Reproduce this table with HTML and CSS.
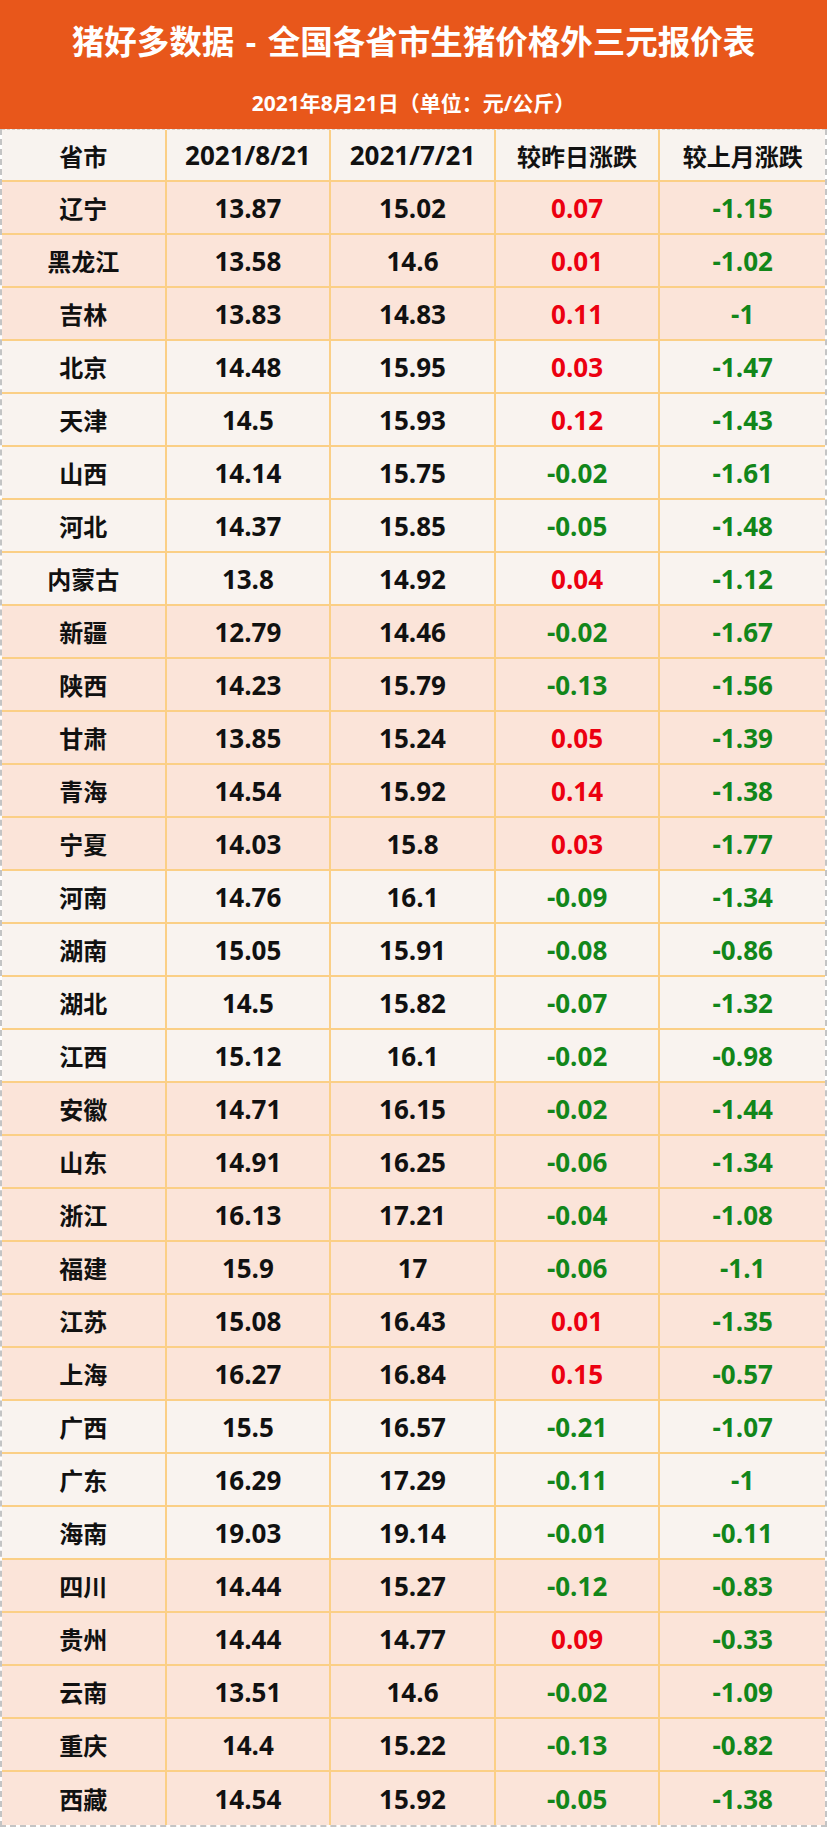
FILE: index.html
```html
<!DOCTYPE html>
<html lang="zh-CN">
<head>
<meta charset="utf-8">
<title>猪好多数据 - 全国各省市生猪价格外三元报价表</title>
<link rel="stylesheet" href="styles.css">
</head>
<body>
<div class="page">
  <header class="banner">
    <h1 class="title">猪好多数据 - 全国各省市生猪价格外三元报价表</h1>
    <p class="subtitle">2021年8月21日（单位：元/公斤）</p>
  </header>
  <div class="sheet">
    <div class="row head"><div class="cell">省市</div><div class="cell">2021/8/21</div><div class="cell">2021/7/21</div><div class="cell">较昨日涨跌</div><div class="cell">较上月涨跌</div></div>
    <div class="row pink"><div class="cell">辽宁</div><div class="cell">13.87</div><div class="cell">15.02</div><div class="cell up">0.07</div><div class="cell down">-1.15</div></div>
    <div class="row pink"><div class="cell">黑龙江</div><div class="cell">13.58</div><div class="cell">14.6</div><div class="cell up">0.01</div><div class="cell down">-1.02</div></div>
    <div class="row pink"><div class="cell">吉林</div><div class="cell">13.83</div><div class="cell">14.83</div><div class="cell up">0.11</div><div class="cell down">-1</div></div>
    <div class="row light"><div class="cell">北京</div><div class="cell">14.48</div><div class="cell">15.95</div><div class="cell up">0.03</div><div class="cell down">-1.47</div></div>
    <div class="row light"><div class="cell">天津</div><div class="cell">14.5</div><div class="cell">15.93</div><div class="cell up">0.12</div><div class="cell down">-1.43</div></div>
    <div class="row light"><div class="cell">山西</div><div class="cell">14.14</div><div class="cell">15.75</div><div class="cell down">-0.02</div><div class="cell down">-1.61</div></div>
    <div class="row light"><div class="cell">河北</div><div class="cell">14.37</div><div class="cell">15.85</div><div class="cell down">-0.05</div><div class="cell down">-1.48</div></div>
    <div class="row light"><div class="cell">内蒙古</div><div class="cell">13.8</div><div class="cell">14.92</div><div class="cell up">0.04</div><div class="cell down">-1.12</div></div>
    <div class="row pink"><div class="cell">新疆</div><div class="cell">12.79</div><div class="cell">14.46</div><div class="cell down">-0.02</div><div class="cell down">-1.67</div></div>
    <div class="row pink"><div class="cell">陕西</div><div class="cell">14.23</div><div class="cell">15.79</div><div class="cell down">-0.13</div><div class="cell down">-1.56</div></div>
    <div class="row pink"><div class="cell">甘肃</div><div class="cell">13.85</div><div class="cell">15.24</div><div class="cell up">0.05</div><div class="cell down">-1.39</div></div>
    <div class="row pink"><div class="cell">青海</div><div class="cell">14.54</div><div class="cell">15.92</div><div class="cell up">0.14</div><div class="cell down">-1.38</div></div>
    <div class="row pink"><div class="cell">宁夏</div><div class="cell">14.03</div><div class="cell">15.8</div><div class="cell up">0.03</div><div class="cell down">-1.77</div></div>
    <div class="row light"><div class="cell">河南</div><div class="cell">14.76</div><div class="cell">16.1</div><div class="cell down">-0.09</div><div class="cell down">-1.34</div></div>
    <div class="row light"><div class="cell">湖南</div><div class="cell">15.05</div><div class="cell">15.91</div><div class="cell down">-0.08</div><div class="cell down">-0.86</div></div>
    <div class="row light"><div class="cell">湖北</div><div class="cell">14.5</div><div class="cell">15.82</div><div class="cell down">-0.07</div><div class="cell down">-1.32</div></div>
    <div class="row light"><div class="cell">江西</div><div class="cell">15.12</div><div class="cell">16.1</div><div class="cell down">-0.02</div><div class="cell down">-0.98</div></div>
    <div class="row pink"><div class="cell">安徽</div><div class="cell">14.71</div><div class="cell">16.15</div><div class="cell down">-0.02</div><div class="cell down">-1.44</div></div>
    <div class="row pink"><div class="cell">山东</div><div class="cell">14.91</div><div class="cell">16.25</div><div class="cell down">-0.06</div><div class="cell down">-1.34</div></div>
    <div class="row pink"><div class="cell">浙江</div><div class="cell">16.13</div><div class="cell">17.21</div><div class="cell down">-0.04</div><div class="cell down">-1.08</div></div>
    <div class="row pink"><div class="cell">福建</div><div class="cell">15.9</div><div class="cell">17</div><div class="cell down">-0.06</div><div class="cell down">-1.1</div></div>
    <div class="row pink"><div class="cell">江苏</div><div class="cell">15.08</div><div class="cell">16.43</div><div class="cell up">0.01</div><div class="cell down">-1.35</div></div>
    <div class="row pink"><div class="cell">上海</div><div class="cell">16.27</div><div class="cell">16.84</div><div class="cell up">0.15</div><div class="cell down">-0.57</div></div>
    <div class="row light"><div class="cell">广西</div><div class="cell">15.5</div><div class="cell">16.57</div><div class="cell down">-0.21</div><div class="cell down">-1.07</div></div>
    <div class="row light"><div class="cell">广东</div><div class="cell">16.29</div><div class="cell">17.29</div><div class="cell down">-0.11</div><div class="cell down">-1</div></div>
    <div class="row light"><div class="cell">海南</div><div class="cell">19.03</div><div class="cell">19.14</div><div class="cell down">-0.01</div><div class="cell down">-0.11</div></div>
    <div class="row pink"><div class="cell">四川</div><div class="cell">14.44</div><div class="cell">15.27</div><div class="cell down">-0.12</div><div class="cell down">-0.83</div></div>
    <div class="row pink"><div class="cell">贵州</div><div class="cell">14.44</div><div class="cell">14.77</div><div class="cell up">0.09</div><div class="cell down">-0.33</div></div>
    <div class="row pink"><div class="cell">云南</div><div class="cell">13.51</div><div class="cell">14.6</div><div class="cell down">-0.02</div><div class="cell down">-1.09</div></div>
    <div class="row pink"><div class="cell">重庆</div><div class="cell">14.4</div><div class="cell">15.22</div><div class="cell down">-0.13</div><div class="cell down">-0.82</div></div>
    <div class="row pink last"><div class="cell">西藏</div><div class="cell">14.54</div><div class="cell">15.92</div><div class="cell down">-0.05</div><div class="cell down">-1.38</div></div>
  </div>
</div>
</body>
</html>
```

FILE: styles.css
```css
html, body {
  margin: 0;
  padding: 0;
  background: #ffffff;
}

body {
  font-family: "Open Sans", "Noto Sans CJK SC", sans-serif;
  font-weight: 700;
  color: #111111;
}

.page {
  width: 827px;
}

.banner {
  height: 129px;
  background: #e8571b;
  color: #ffffff;
  display: flex;
  flex-direction: column;
  align-items: center;
  box-sizing: border-box;
  padding-top: 20px;
}

.title {
  margin: 0;
  font-size: 32.5px;
  line-height: 44px;
  font-weight: 700;
  word-spacing: 3px;
}

.subtitle {
  margin: 25px 0 0 0;
  font-size: 21px;
  line-height: 28px;
  font-weight: 700;
}

.sheet {
  width: 823px;
  border-left: 2px dashed #c4c4c4;
  border-right: 2px dashed #c4c4c4;
  border-bottom: 2px dashed #c4c4c4;
}

.row {
  display: grid;
  grid-template-columns: repeat(5, 1fr);
  height: 53px;
  box-sizing: border-box;
  border-bottom: 2px solid #fbcf86;
}

.row.last {
  border-bottom: none;
}

.row.head {
  background: #f8f3ef;
  border-top: 1px dashed #d8d0c8;
}

.row.pink {
  background: #fbe4d9;
}

.row.light {
  background: #f9f3ef;
}

.cell {
  display: flex;
  align-items: center;
  justify-content: center;
  font-size: 24px;
  border-right: 2px solid #fbcf86;
}

.row:not(.head) .cell:not(:first-child),
.row.head .cell:nth-child(2),
.row.head .cell:nth-child(3) {
  font-size: 26px;
}

.cell:last-child {
  border-right: none;
}

.up {
  color: #ec0010;
}

.down {
  color: #12861a;
}
```
